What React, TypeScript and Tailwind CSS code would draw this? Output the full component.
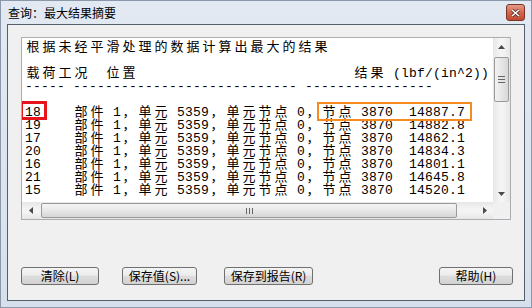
import React from "react";

const rows: [string, string][] = [
  ["18", "14887.7"],
  ["19", "14882.8"],
  ["17", "14862.1"],
  ["20", "14834.3"],
  ["16", "14801.1"],
  ["21", "14645.8"],
  ["15", "14520.1"],
];

const lines: string[] = [
  "根据未经平滑处理的数据计算出最大的结果",
  "",
  "载荷工况  位置" + " ".repeat(27) + "结果 (lbf/(in^2))",
  "-----" + " " + "-".repeat(28) + " " + "-".repeat(16),
  "",
  ...rows.map(([lc, v]) => `${lc}    部件 1，单元 5359，单元节点 0，节点 3870  ${v}`),
];

function Line({ text }: { text: string }) {
  const chars = Array.from(text);
  return (
    <div className="flex h-[13px] items-center whitespace-pre">
      {chars.map((c, i) => {
        const wide = c.charCodeAt(0) > 0x2e80;
        return (
          <span
            key={i}
            className={
              wide
                ? "inline-block w-[16px] shrink-0 text-center text-[13px] leading-[13px]"
                : "inline-block w-[8px] shrink-0 text-center text-[13px] leading-[13px]"
            }
          >
            {c === " " ? "" : c}
          </span>
        );
      })}
    </div>
  );
}

function Tri({ dir }: { dir: "up" | "down" | "left" | "right" }) {
  const pts =
    dir === "up"
      ? "0,4 7,4 3.5,0"
      : dir === "down"
      ? "0,0 7,0 3.5,4"
      : dir === "left"
      ? "4,0 4,7 0,3.5"
      : "0,0 0,7 4,3.5";
  const w = dir === "up" || dir === "down" ? 7 : 4;
  const h = dir === "up" || dir === "down" ? 4 : 7;
  return (
    <svg width={w} height={h} viewBox={`0 0 ${w} ${h}`}>
      <polygon points={pts} fill="#4a4a4a" />
    </svg>
  );
}

function Btn({ label, w }: { label: string; w: string }) {
  return (
    <div
      className={`${w} flex h-[18px] items-center justify-center rounded-[3px] border border-[#707070] bg-[linear-gradient(#f4f4f4,#ececec_45%,#dddddd_50%,#d2d2d2)] text-[12px] leading-none text-black`}
    >
      {label}
    </div>
  );
}

export default function App() {
  return (
    <div
      className="flex h-[308px] w-[532px] flex-col border border-[#8a98aa] bg-[linear-gradient(#e2e9f2,#d6e0ec)]"
      style={{ fontFamily: '"Noto Sans CJK SC", "Noto Sans", sans-serif' }}
    >
      {/* title bar */}
      <div className="flex h-[23px] shrink-0 items-center pl-[7px] pr-[6px]">
        <span className="text-[12px] leading-none text-black">查询：最大结果摘要</span>
        <div className="ml-auto flex h-[17px] w-[19px] items-center justify-center rounded-[3px] border border-[#7a3426] bg-[linear-gradient(#e49a8a,#d2664f_50%,#c04a31)]">
          <svg width="9" height="8" viewBox="0 0 9 8">
            <path d="M1 1 L8 7 M8 1 L1 7" stroke="#5a2a20" strokeWidth="3" />
            <path d="M1 1 L8 7 M8 1 L1 7" stroke="#ffffff" strokeWidth="1.6" />
          </svg>
        </div>
      </div>

      {/* client area */}
      <div className="mx-[6px] mb-[6px] flex flex-1 flex-col border border-[#56606c] bg-[#f0f0f0]">
        {/* text panel */}
        <div className="ml-[13px] mt-[12px] flex h-[183px] w-[490px] flex-col border border-[#abadb3] bg-white">
          <div className="flex h-[164px]">
            <div
              className="relative h-[164px] w-[471px] overflow-hidden pl-[3px] pt-[3px] text-black"
              style={{ fontFamily: '"Liberation Mono", "Noto Sans CJK SC", monospace' }}
            >
              {lines.map((l, i) => (
                <Line key={i} text={l} />
              ))}
              <div className="absolute left-[-2px] top-[63px] h-[19px] w-[27px] border-[3px] border-[#e8141b]" />
              <div className="absolute left-[295px] top-[64px] h-[19px] w-[155px] border-[2px] border-[#f58a1f]" />
            </div>
            {/* vertical scrollbar */}
            <div className="flex w-[17px] flex-col bg-[linear-gradient(90deg,#e6e6e6,#f4f4f4_40%,#f4f4f4_60%,#e6e6e6)]">
              <div className="flex h-[17px] items-center justify-center">
                <Tri dir="up" />
              </div>
              <div className="mx-[1px] mt-[2px] flex h-[45px] flex-col items-center justify-center gap-[2px] rounded-[2px] border border-[#9a9a9a] bg-[linear-gradient(90deg,#f2f2f2,#e6e6e6_50%,#d8d8d8)]">
                <div className="h-px w-[7px] bg-[#666]" />
                <div className="h-px w-[7px] bg-[#666]" />
                <div className="h-px w-[7px] bg-[#666]" />
              </div>
              <div className="flex-1" />
              <div className="flex h-[17px] items-center justify-center">
                <Tri dir="down" />
              </div>
            </div>
          </div>
          {/* horizontal scrollbar */}
          <div className="flex h-[17px]">
            <div className="flex w-[471px] items-center bg-[linear-gradient(#e6e6e6,#f4f4f4_40%,#f4f4f4_60%,#e6e6e6)]">
              <div className="flex h-[17px] w-[17px] items-center justify-center">
                <Tri dir="left" />
              </div>
              <div className="ml-[2px] flex h-[15px] w-[416px] items-center justify-center gap-[2px] rounded-[2px] border border-[#9a9a9a] bg-[linear-gradient(#f4f4f4,#e8e8e8_50%,#d6d6d6)]">
                <div className="h-[6px] w-px bg-[#666]" />
                <div className="h-[6px] w-px bg-[#666]" />
                <div className="h-[6px] w-px bg-[#666]" />
              </div>
              <div className="flex-1" />
              <div className="flex h-[17px] w-[17px] items-center justify-center">
                <Tri dir="right" />
              </div>
            </div>
            <div className="w-[17px] bg-[#f0f0f0]" />
          </div>
        </div>

        <div className="flex-1" />

        {/* buttons */}
        <div className="mb-[15px] ml-[13px] mr-[11px] flex items-center">
          <Btn label="清除(L)" w="w-[78px]" />
          <div className="w-[23px]" />
          <Btn label="保存值(S)..." w="w-[75px]" />
          <div className="w-[27px]" />
          <Btn label="保存到报告(R)" w="w-[89px]" />
          <div className="flex-1" />
          <Btn label="帮助(H)" w="w-[74px]" />
        </div>
      </div>
    </div>
  );
}
